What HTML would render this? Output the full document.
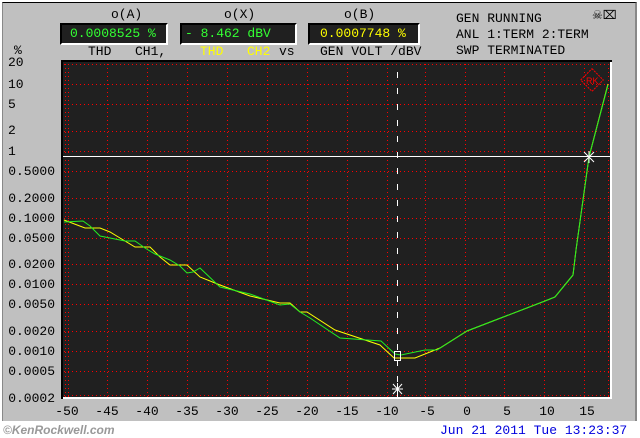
<!DOCTYPE html>
<html><head><meta charset="utf-8"><style>
body{margin:0;width:640px;height:436px;overflow:hidden;background:#fff;position:relative;font-family:"Liberation Mono",monospace;}
.win{position:absolute;left:2px;top:2px;width:632px;height:418px;background:#c0c0c0;border-top:1px solid #000;border-left:1px solid #888;border-right:2px solid #888;}
.t{position:absolute;font-size:13px;line-height:13px;color:#000;white-space:pre;}
.box{position:absolute;background:#202020;border:2px solid #000;border-right-color:#fff;border-bottom-color:#fff;height:18px;font-size:13px;line-height:18px;white-space:pre;}
.y{position:absolute;left:4px;width:51px;text-align:right;font-size:13px;line-height:13px;}
.x{position:absolute;top:405px;width:40px;text-align:center;font-size:13px;line-height:13px;}
</style></head><body>
<div class="win"></div>
<div class="t" style="left:111px;top:8px">o(A)</div>
<div class="t" style="left:224px;top:8px">o(X)</div>
<div class="t" style="left:344px;top:8px">o(B)</div>
<div class="box" style="left:60px;top:23px;color:#3f3;padding-left:8px;width:96px">0.0008525 %</div>
<div class="box" style="left:180px;top:23px;color:#3f3;width:110px;padding-left:3px">- 8.462 dBV</div>
<div class="box" style="left:308px;top:23px;color:#ff0;width:98px;padding-left:10px">0.0007748 %</div>
<div class="t" style="left:88px;top:45px">THD</div>
<div class="t" style="left:135px;top:45px">CH1,</div>
<div class="t" style="left:200px;top:45px;color:#ff0">THD</div>
<div class="t" style="left:247px;top:45px;color:#ff0">CH2</div>
<div class="t" style="left:279px;top:45px">vs</div>
<div class="t" style="left:320px;top:45px">GEN VOLT /dBV</div>
<div class="t" style="left:456px;top:12px">GEN RUNNING</div>
<div class="t" style="left:456px;top:28px">ANL 1:TERM 2:TERM</div>
<div class="t" style="left:456px;top:44px">SWP TERMINATED</div>
<div class="t" style="left:592px;top:10px;font-size:12px">&#9760;&#8999;</div>
<div class="t" style="left:14px;top:44px">%</div>
<div class="y" style="top:56px;text-align:left;left:8px">20</div>
<div class="y" style="top:78px;text-align:left;left:8px">10</div>
<div class="y" style="top:98px;text-align:left;left:8px">5</div>
<div class="y" style="top:124px;text-align:left;left:8px">2</div>
<div class="y" style="top:145px;text-align:left;left:8px">1</div>
<div class="y" style="top:165px">0.5000</div>
<div class="y" style="top:192px">0.2000</div>
<div class="y" style="top:212px">0.1000</div>
<div class="y" style="top:232px">0.0500</div>
<div class="y" style="top:258px">0.0200</div>
<div class="y" style="top:278px">0.0100</div>
<div class="y" style="top:298px">0.0050</div>
<div class="y" style="top:325px">0.0020</div>
<div class="y" style="top:345px">0.0010</div>
<div class="y" style="top:365px">0.0005</div>
<div class="y" style="top:392px">0.0002</div>
<div class="x" style="left:47px">-50</div><div class="x" style="left:87px">-45</div><div class="x" style="left:127px">-40</div><div class="x" style="left:167px">-35</div><div class="x" style="left:207px">-30</div><div class="x" style="left:247px">-25</div><div class="x" style="left:287px">-20</div><div class="x" style="left:327px">-15</div><div class="x" style="left:367px">-10</div><div class="x" style="left:407px">-5</div><div class="x" style="left:447px">0</div><div class="x" style="left:487px">5</div><div class="x" style="left:527px">10</div><div class="x" style="left:567px">15</div>
<svg style="position:absolute;left:0;top:0" width="640" height="436" shape-rendering="crispEdges">
<defs>
<pattern id="vd" patternUnits="userSpaceOnUse" x="0" y="0" width="1" height="4"><rect width="1" height="1" fill="#f00"/></pattern>
<pattern id="hd" patternUnits="userSpaceOnUse" x="0" y="0" width="4" height="1"><rect width="1" height="1" fill="#f00"/></pattern>
</defs>
<rect x="61" y="60" width="551" height="339" fill="#000"/>
<rect x="63" y="62" width="549" height="337" fill="#fff"/>
<rect x="63" y="62" width="547" height="335" fill="#202020"/>
<g fill="url(#vd)">
<rect x="65" y="62" width="1" height="335"/><rect x="68" y="62" width="1" height="335"/><rect x="107" y="62" width="1" height="335"/><rect x="147" y="62" width="1" height="335"/><rect x="187" y="62" width="1" height="335"/><rect x="227" y="62" width="1" height="335"/><rect x="267" y="62" width="1" height="335"/><rect x="307" y="62" width="1" height="335"/><rect x="347" y="62" width="1" height="335"/><rect x="387" y="62" width="1" height="335"/><rect x="425" y="62" width="1" height="335"/><rect x="465" y="62" width="1" height="335"/><rect x="504" y="62" width="1" height="335"/><rect x="544" y="62" width="1" height="335"/><rect x="584" y="62" width="1" height="335"/><rect x="608" y="62" width="1" height="335"/>
</g>
<g fill="url(#hd)">
<rect x="63" y="64" width="547" height="1"/><rect x="63" y="84" width="547" height="1"/><rect x="63" y="104" width="547" height="1"/><rect x="63" y="131" width="547" height="1"/><rect x="63" y="151" width="547" height="1"/><rect x="63" y="171" width="547" height="1"/><rect x="63" y="198" width="547" height="1"/><rect x="63" y="218" width="547" height="1"/><rect x="63" y="238" width="547" height="1"/><rect x="63" y="264" width="547" height="1"/><rect x="63" y="284" width="547" height="1"/><rect x="63" y="304" width="547" height="1"/><rect x="63" y="331" width="547" height="1"/><rect x="63" y="351" width="547" height="1"/><rect x="63" y="371" width="547" height="1"/><rect x="63" y="395" width="547" height="1"/>
</g>
<rect x="63" y="156" width="547" height="1" fill="#fff"/>
<path d="M397.5 72V397" stroke="#fff" stroke-dasharray="6,10"/>
<g shape-rendering="auto">
<polyline fill="none" stroke="#ff0" points="64,220 85,228 100,228 110,232 120,238 135,247 150,247 160,257 170,265 187,265 200,277 220,285 250,296 280,303 290,303 300,312 307,312 335,330 380,345 394,358 415,358 440,348 467,331 545,301 555,297 573,275 576,250 589,157 608,84"/>
<polyline fill="none" stroke="#2e2" points="64,222 83,221 90,226 100,236 115,239 125,241 135,241 145,248 155,254 170,260 180,266 187,273 193,272 200,268 220,287 250,294 280,305 290,304 300,312 310,318 340,338 381,341 395,354 401,355 425,350 437,350 467,331 545,301 555,297 573,275 576,250 589,157 608,85"/>
<g stroke="#fff" fill="none"><path d="M584 152l10 10M594 152l-10 10M589 151v12M392 389h11M397.5 383v12M393 384l9 10M402 384l-9 10"/><rect x="394.5" y="351.5" width="6" height="9"/></g>
<g transform="translate(592,80) rotate(45)"><rect x="-8" y="-8" width="16" height="16" fill="none" stroke="#f00" stroke-dasharray="2,1"/></g>
<text x="586" y="84" fill="#f00" font-size="9" font-family="Liberation Sans">RK</text>
</g>
</svg>
<div class="t" style="left:3px;top:424px;color:#999;font-family:'Liberation Sans';font-style:italic;font-weight:bold;font-size:12px">©KenRockwell.com</div>
<div class="t" style="left:440px;top:424px;color:#00d;font-size:13px">Jun 21 2011 Tue 13:23:37</div>
</body></html>
